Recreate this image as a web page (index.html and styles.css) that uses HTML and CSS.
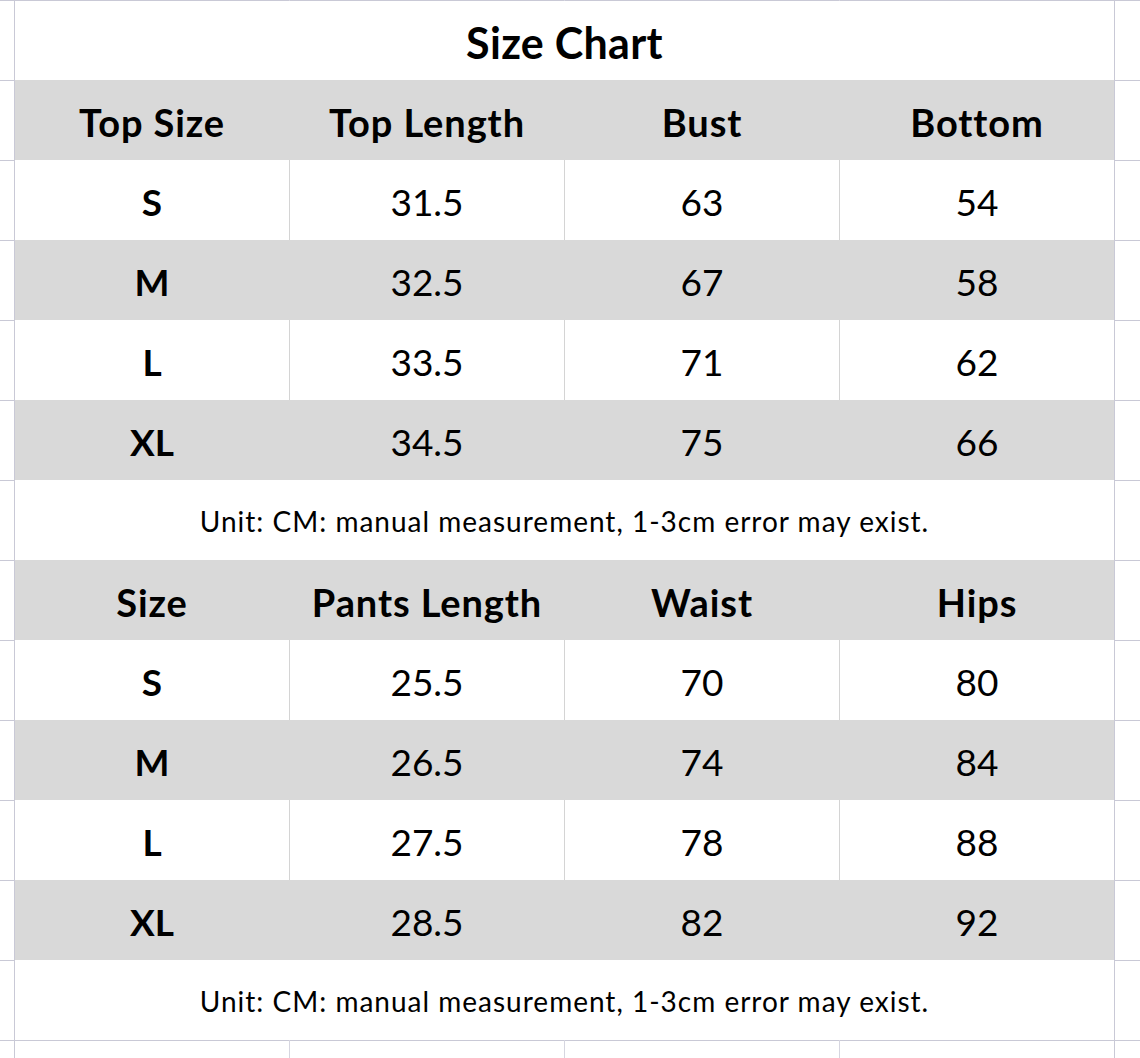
FILE: index.html
```html
<!DOCTYPE html>
<html>
<head>
<meta charset="utf-8">
<link rel="stylesheet" href="styles.css">
</head>
<body>
<div class="sheet">
  <div class="chart">
    <div class="title-row">Size Chart</div>

    <div class="row head">
      <div class="cell">Top Size</div>
      <div class="cell">Top Length</div>
      <div class="cell">Bust</div>
      <div class="cell">Bottom</div>
    </div>
    <div class="row">
      <div class="cell size">S</div><div class="cell">31.5</div><div class="cell">63</div><div class="cell">54</div>
    </div>
    <div class="row grey">
      <div class="cell size">M</div><div class="cell">32.5</div><div class="cell">67</div><div class="cell">58</div>
    </div>
    <div class="row">
      <div class="cell size">L</div><div class="cell">33.5</div><div class="cell">71</div><div class="cell">62</div>
    </div>
    <div class="row grey">
      <div class="cell size">XL</div><div class="cell">34.5</div><div class="cell">75</div><div class="cell">66</div>
    </div>
    <div class="note-row">Unit: CM: manual measurement, 1-3cm error may exist.</div>

    <div class="row head">
      <div class="cell">Size</div>
      <div class="cell">Pants Length</div>
      <div class="cell">Waist</div>
      <div class="cell">Hips</div>
    </div>
    <div class="row">
      <div class="cell size">S</div><div class="cell">25.5</div><div class="cell">70</div><div class="cell">80</div>
    </div>
    <div class="row grey">
      <div class="cell size">M</div><div class="cell">26.5</div><div class="cell">74</div><div class="cell">84</div>
    </div>
    <div class="row">
      <div class="cell size">L</div><div class="cell">27.5</div><div class="cell">78</div><div class="cell">88</div>
    </div>
    <div class="row grey">
      <div class="cell size">XL</div><div class="cell">28.5</div><div class="cell">82</div><div class="cell">92</div>
    </div>
    <div class="note-row">Unit: CM: manual measurement, 1-3cm error may exist.</div>
  </div>
</div>
</body>
</html>
```

FILE: styles.css
```css
html, body {
  margin: 0;
  padding: 0;
  background: #ffffff;
}

body {
  font-family: Lato, "Open Sans", "Noto Sans", sans-serif;
  color: #000000;
}

.sheet {
  width: 1140px;
  height: 1058px;
  overflow: hidden;
  background-color: #ffffff;
  background-image:
    linear-gradient(to right,
      transparent 14px, #c9c9d6 14px, #c9c9d6 15px, transparent 15px,
      transparent 289px, #d6d6e0 289px, #d6d6e0 290px, transparent 290px,
      transparent 564px, #d6d6e0 564px, #d6d6e0 565px, transparent 565px,
      transparent 839px, #d6d6e0 839px, #d6d6e0 840px, transparent 840px,
      transparent 1114px, #c9c9d6 1114px, #c9c9d6 1115px, transparent 1115px),
    repeating-linear-gradient(to bottom, #c9c9d6 0, #c9c9d6 1px, transparent 1px, transparent 80px);
  padding-top: 1px;
  box-sizing: border-box;
}

.chart {
  margin-left: 15px;
  width: 1099px;
  background: #ffffff;
}

.title-row {
  height: 79px;
  display: flex;
  align-items: center;
  justify-content: center;
  font-weight: 700;
  font-size: 43px;
  letter-spacing: 0.3px;
  padding-top: 3px;
  box-sizing: border-box;
}

.row {
  display: grid;
  grid-template-columns: 275px 275px 275px 274px;
  height: 80px;
}

.row.head,
.row.grey {
  background: #d9d9d9;
}

.cell {
  display: flex;
  align-items: center;
  justify-content: center;
  font-size: 37px;
  padding-top: 3px;
  box-sizing: border-box;
  border-right: 1px solid #d4d4d4;
}

.cell:last-child {
  border-right: none;
}

.row.head .cell,
.row.grey .cell {
  border-right-color: transparent;
}

.row.head .cell {
  font-size: 38px;
  letter-spacing: 0.9px;
}

.row.head .cell,
.cell.size {
  font-weight: 700;
}

.note-row {
  height: 80px;
  display: flex;
  align-items: center;
  justify-content: center;
  font-size: 28px;
  letter-spacing: 1px;
  padding-top: 2px;
  box-sizing: border-box;
}
```
